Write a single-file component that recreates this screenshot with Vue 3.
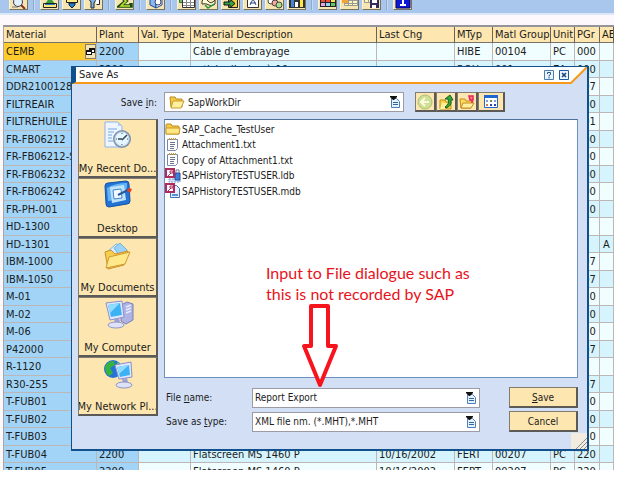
<script setup>
import { ref } from 'vue'

const toolbar = [
  { name: 'Details', svg: '<circle cx="7" cy="2" r="4.5" fill="#dff1ff" stroke="#335"/><path d="M10 5l4 4" stroke="#8a2d20" stroke-width="2"/><path d="M1 7h6" stroke="#777"/>' },
  { sep: true },
  { name: 'Sort ascending', svg: '<path d="M3 4L8-3l5 7z" fill="#3aa13a"/><path d="M1.500 3.500h13v4h-13z" fill="#ffe97a" stroke="#222"/><path d="M3 4h10v1H3z" fill="#2b7ad0"/>' },
  { name: 'Sort descending', svg: '<path d="M2.500-1.500h11v4h-11z" fill="#ffe97a" stroke="#222"/><path d="M5 3h6v2L8 8 5 5z" fill="#2b7ad0" stroke="#123"/>' },
  { name: 'Filter', svg: '<path d="M2-2h9L8 3v5H5V2z" fill="#7fb3ea" stroke="#223"/><path d="M9.500-.5h4v5h-3" fill="#fff" stroke="#223"/>' },
  { sep: true },
  { name: 'Total', svg: '<path d="M3-4h9M3-4l6 5-6 5h11V3" fill="none" stroke="#174b12" stroke-width="3.500"/><path d="M4-3l5 4-5 5h9" fill="none" stroke="#c7e52c" stroke-width="1.500"/>' },
  { sep: true },
  { name: 'Print preview', svg: '<path d="M2-2l6 2v8L2 5z" fill="#87b8f0" stroke="#224a9c"/><path d="M8 0l6-2v7L8 8z" fill="#e9f3ff" stroke="#224a9c"/><circle cx="10" cy="2" r="3" fill="#fff" stroke="#446"/>' },
  { sep: true },
  { name: 'Spreadsheet', svg: '<path d="M.5-4.500h11v7H.5z" fill="#6cba74" stroke="#2b7b42"/><path d="M3.500-.5h12v8h-12z" fill="#fff" stroke="#333"/><path d="M4 2.500h11M4 5.500h11M7.500 0v7M11.500 0v7" stroke="#8a8a8a"/>' },
  { name: 'Word processing', svg: '<path d="M1 1q3-4 6 0t7-1v4q-3 3-6 1T1 4z" fill="#fffbd0" stroke="#333"/><path d="M4 5l3 3 6-4" stroke="#2a9440" fill="none" stroke-width="1.500"/>' },
  { name: 'Local file', svg: '<path d="M5.500-3.500h9v11h-9z" fill="#f5cf3f" stroke="#222"/><path d="M1 2h6v-3l5 4.500-5 4.500V5H1z" fill="#35a04a" stroke="#111"/>' },
  { name: 'Mail recipient', svg: '<path d="M2.500-3.500h11v11h-11z" fill="#fff" stroke="#333"/><path d="M5 5l3-6 3 6M5 3h6" fill="none" stroke="#334a80"/>' },
  { name: 'ABC analysis', svg: '<circle cx="4" cy="1" r="3" fill="#fff" stroke="#444"/><circle cx="8" cy="3" r="3" fill="#f9a7a0" stroke="#444"/><circle cx="12" cy="5" r="3" fill="#a6df8e" stroke="#444"/>' },
  { name: 'Graphic', svg: '<path d="M0-3h16V8H0z" fill="#333"/><path d="M2 0h3v7H2z" fill="#3d85dd"/><path d="M6 2h3v5H6z" fill="#fff"/><path d="M11-1h3v8h-3z" fill="#ffe34a"/>' },
  { sep: true },
  { name: 'Choose layout', svg: '<path d="M0-4h16V7H0z" fill="#222"/><path d="M1-1h4v3H1zM6-1h4v3H6z" fill="#ef4b3a"/><path d="M11-1h4v3h-4z" fill="#ffe34a"/><path d="M1 3h4v3H1z" fill="#eaa7e5"/><path d="M6 3h4v3H6z" fill="#8fd8f5"/><path d="M11 3h4v3h-4z" fill="#62c95e"/>' },
  { name: 'Change layout', svg: '<path d="M2.500-4.500h13v10h-13z" fill="#fff5b5" stroke="#999"/><path d="M3 .5h12M3 3.500h12M6.500-4v9M10.500-4v9" stroke="#999"/><path d="M0 0h6v3H0z" fill="#f4a338"/>' },
  { name: 'Save layout', svg: '<path d="M.5-4.500h13v7H.5z" fill="#fff5b5" stroke="#999"/><path d="M1-.5h12M4.500-4v6" stroke="#999"/><path d="M6 0h9v8H6z" fill="#302c60"/><path d="M8 0h5v3H8zM8 5h4v3H8z" fill="#fff"/>' },
  { sep: true },
  { name: 'Information', svg: '<path d="M1-4h14V8H1z" fill="#1018d8" stroke="#000060"/><path d="M6-2h3v6h2v2H5V4h2V0H6z" fill="#fff"/>' }
]

const columns = ['Material', 'Plant', 'Val. Type', 'Material Description', 'Last Chg', 'MTyp', 'Matl Group', 'Unit', 'PGr', 'AE']
const row = (material, pgr, rest = {}) => ({ material, plant: '2200', text: '', date: '', type: '', group: '', unit: '', ae: '', pgr, ...rest })
const screen = { text: 'Flatscreen MS 1460 P', date: '10/16/2002', type: 'FERT', group: '00207', unit: 'PC' }
const rows = [
  row('CEMB', '000', { text: "Câble d'embrayage", type: 'HIBE', group: '00104', unit: 'PC' }),
  row('CMART', '000', { text: 'article d’usine à 10', type: 'ROH', group: '001', unit: 'EA' }),
  row('DDR2100128', '007'),
  row('FILTREAIR', '000'),
  row('FILTREHUILE', '001'),
  row('FR-FB06212', '000'),
  row('FR-FB06212-S', '000'),
  row('FR-FB06232', '000'),
  row('FR-FB06242', '000'),
  row('FR-PH-001', '220'),
  row('HD-1300', ''),
  row('HD-1301', '', { ae: 'A' }),
  row('IBM-1000', '007'),
  row('IBM-1050', '007'),
  row('M-01', '220'),
  row('M-02', '220'),
  row('M-06', '220'),
  row('P42000', '007'),
  row('R-1120', ''),
  row('R30-255', '007'),
  row('T-FUB01', '220'),
  row('T-FUB02', '220'),
  row('T-FUB03', '220'),
  row('T-FUB04', '220', screen),
  row('T-FUB05', '220', screen)
]

const places = [
  { label: 'My Recent Do...', svg: '<path d="M3 1h13l4 4v21H3z" fill="#eef5ff" stroke="#8fb3e8"/><path d="M16 1v4h4z" fill="#b7d0f5"/><path d="M6 8h9M6 11h6M6 14h4M6 17h4M6 20h5" stroke="#9cc0f0" stroke-width="1.500"/><circle cx="20" cy="18" r="9" fill="#7d94ad"/><circle cx="20" cy="18" r="7" fill="#e4f6ff" stroke="#c7d9e8"/><path d="M20 19l5-5M20 18h-4" stroke="#345" stroke-width="1.500"/><path d="M20 12v1M20 23v1M14 18h1M25 18h1" stroke="#456"/>' },
  { label: 'Desktop', svg: '<path d="M3 6q0-3 3-3l18-2q3 0 3 3l1 17q0 3-3 3L7 27q-3 0-3-3z" fill="#2273d4" stroke="#1552a8"/><path d="M5 8q8-5 20-5v4q-4 13-19 14z" fill="#63b4f5"/><path d="M8 7l14-2 2 15-14 3z" fill="#bfe2fb"/><path d="M11 10l8-1 1 9-8 1z" fill="#f4faff" stroke="#3e86d0"/><path d="M16 15l10-5" stroke="#245a9e" stroke-width="2"/><path d="M26 8l4 1-2 4-3-2z" fill="#e33f20"/>' },
  { label: 'My Documents', svg: '<path d="M5 12l9-8 4 1 8 7-7 12z" fill="#d9efff" stroke="#7eb4df"/><path d="M12 8l6-5 7 7-6 8z" fill="#9bd2f8" stroke="#78b1dc"/><path d="M3 12l6-2 4 4 13-3-4 14-16 4z" fill="#f7cd4d" stroke="#c8912c"/><path d="M4 28l3-11 21-5-5 12z" fill="#ffe98b" stroke="#d29a2e"/>' },
  { label: 'My Computer', svg: '<path d="M19 6l6-3 6 2v16l-7 4-5-3z" fill="#aeb3e4" stroke="#7a80bd"/><path d="M24 8l5-2M24 11l5-2M24 14l5-2" stroke="#e8ebff" stroke-width="1.500"/><path d="M4 4l16-2 2 16-14 3z" fill="#e4e8fb" stroke="#8790cc"/><path d="M6 6l12-2 2 12-11 2z" fill="#3cb2f5"/><path d="M6 6l12-2-10 10z" fill="#8fdcff"/><path d="M12 20l5-1 1 4-5 2z" fill="#9aa2d6"/><ellipse cx="14" cy="26" rx="8" ry="3" fill="#dfe2f7" stroke="#8f95c9"/>' },
  { label: 'My Network Pl...', svg: '<circle cx="11" cy="10" r="9" fill="#2474d8"/><path d="M3 8q3-7 9-6l1 4-5 3 3 5-4 3q-4-3-4-9z" fill="#36b33c"/><path d="M15 3l4 3-3 3z" fill="#7cd455"/><path d="M13 6l16-3 1 15-13 2z" fill="#e4e8fb" stroke="#8790cc"/><path d="M15 8l12-2 1 10-10 2z" fill="#3cb2f5"/><path d="M15 8l12-2-10 9z" fill="#8fdcff"/><path d="M20 20l5-1 1 4-5 1z" fill="#9aa2d6"/><ellipse cx="22" cy="26" rx="8" ry="3" fill="#dfe2f7" stroke="#8f95c9"/>' }
]

const page = '<path d="M2.500 2.500h10v9l-2 2h-8z" fill="#fff" stroke="#7b85ae"/><path d="M4.500 1v2M6.500 1v2M8.500 1v2M10.500 1v2" stroke="#c59a3a"/><path d="M5 5.500h5M5 7.500h5M5 9.500h4M5 11.500h4" stroke="#6b7690"/>'
const key = '<path d="M1 1h8v8H1z" fill="#fff" stroke="#b02a5c" stroke-width="2"/><path d="M3 8l3-3M5 3h3v2H5z" stroke="#b02a5c" fill="none"/>'
const folder = '<path d="M1 4q0-1 1-1h4l1 2h6q1 0 1 1v7H1z" fill="#f7ca45" stroke="#b98a1c"/><path d="M1 13V7h14l-1 6z" fill="#ffe784" stroke="#c89a2c"/>'
const openFolder = '<path d="M1 3h5l1 2h6v8H2z" fill="#f7ca45" stroke="#b98a1c"/><path d="M2 14l2-7h11l-3 7z" fill="#fff0a0" stroke="#c89a2c"/>'
const files = [
  { name: 'SAP_Cache_TestUser', svg: folder },
  { name: 'Attachment1.txt', svg: page },
  { name: 'Copy of Attachment1.txt', svg: page },
  { name: 'SAPHistoryTESTUSER.ldb', svg: '<path d="M4 11h11v3H4z" fill="#cfe0f7" stroke="#7e9cc8" stroke-dasharray="2 1"/><path d="M10 5h5v7h-5z" fill="#3f7fd8" stroke="#1f4f9c"/><path d="M11 5V2h3v3" fill="none" stroke="#6b7a96"/>' + key },
  { name: 'SAPHistoryTESTUSER.mdb', svg: '<path d="M5.500 2.500h6l3 3v9h-9z" fill="#e5efff" stroke="#3c70b8"/><path d="M7 12h6" stroke="#5c8ed2" stroke-width="2"/>' + key }
]

const tools = [
  { name: 'Back', svg: '<circle cx="8" cy="8" r="7" fill="#cfdf93" stroke="#a9bf70"/><path d="M12 8H5M8 4L4 8l4 4" stroke="#fffbe0" stroke-width="2" fill="none"/>' },
  { name: 'Up one level', svg: '<path d="M2 6h5l1 2h5v7H2z" fill="#fbd54d" stroke="#c08b1c"/><path d="M2 15l2-6h5l-2 6z" fill="#fff0a0"/><path d="M7 13q5-3 3-8H7l5-4 3 5h-2q1 6-5 8z" fill="#31a836" stroke="#17611b"/>' },
  { name: 'New folder', svg: '<path d="M1 5h5l1 2h7l-2 7H2z" fill="#ffdc5c" stroke="#c68a20"/><path d="M2 14l2-5h11l-3 5z" fill="#fff0a0" stroke="#c68a20"/><path d="M10 2h4v4h-3zM13 6v3" fill="#ff8a50" stroke="#e8236a" stroke-width="1.500"/>' },
  { name: 'View menu', svg: '<path d="M1.500 1.500h13v12h-13z" fill="#fff" stroke="#1f66d0"/><path d="M1 1h14v3H1z" fill="#1f66d0"/><path d="M3 6h2v2H3zM11 6h2v2h-2z" fill="#8a9bd8"/><path d="M7 6h2v2H7z" fill="#5f9a4b"/><path d="M3 10h2v2H3z" fill="#d07a50"/><path d="M7 10h2v2H7zM11 10h2v2h-2z" fill="#2b4aa8"/>' }
]
const drop = '<path d="M1.500 2.500h5l3 3v6h-8z" fill="#e6f1ff" stroke="#4d7fb5"/><path d="M3 6.500h5M3 8.500h5" stroke="#356596"/><path d="M0 0h7v1L4 4H3L0 1z" fill="#111"/>'

const fileName = ref('Report Export')
</script>

<template>
  <main class="screen">
    <nav class="toolbar" aria-label="List functions">
      <template v-for="(t, i) in toolbar" :key="i">
        <span v-if="t.sep" class="sep"></span>
        <button v-else class="tool" type="button" :aria-label="t.name">
          <svg viewBox="0 -7 16 16" width="16" height="16" fill="none" v-html="t.svg"></svg>
        </button>
      </template>
    </nav>

    <table class="grid">
      <colgroup>
        <col v-for="(c, i) in columns" :key="c" :class="'c' + i" />
      </colgroup>
      <thead>
        <tr><th v-for="c in columns" :key="c" scope="col">{{ c }}</th></tr>
      </thead>
      <tbody>
        <tr v-for="(r, i) in rows" :key="r.material">
          <td class="key" :class="{ current: i === 0 }">
            <div v-if="i === 0" class="active">
              <span>{{ r.material }}</span>
              <button type="button" aria-label="Possible entries">
                <svg viewBox="0 0 9 9" width="9" height="9"><path d="M3 1h6v5H3z" fill="#111" /><path d="M4 3h4v2H4z" fill="#fff" /><path d="M0 3h6v5H0z" fill="#111" /><path d="M1 5h4v2H1z" fill="#fff" /></svg>
              </button>
            </div>
            <template v-else>{{ r.material }}</template>
          </td>
          <td class="key">{{ r.plant }}</td>
          <td></td>
          <td>{{ r.text }}</td>
          <td>{{ r.date }}</td>
          <td>{{ r.type }}</td>
          <td>{{ r.group }}</td>
          <td>{{ r.unit }}</td>
          <td>{{ r.pgr }}</td>
          <td class="ae">{{ r.ae }}</td>
        </tr>
      </tbody>
    </table>

    <section class="dialog" role="dialog" aria-labelledby="dialog-title">
      <header class="titlebar">
        <h1 id="dialog-title">Save As</h1>
        <button type="button" aria-label="Help">
          <svg viewBox="0 0 10 10" width="10" height="10"><path d="M.5.5h9v9h-9z" fill="#eaf2fd" stroke="#4b7db5" /><path d="M3.500 4V2.500h3v2L5 5.500v1M5 7v1.500" fill="none" stroke="#24568f" /></svg>
        </button>
        <button type="button" aria-label="Close">
          <svg viewBox="0 0 10 10" width="10" height="10"><path d="M.5.5h9v9h-9z" fill="#eaf2fd" stroke="#1d5ba3" /><path d="M3 3l4 4M7 3L3 7" stroke="#14437c" stroke-width="1.500" /></svg>
        </button>
        <svg class="corner" viewBox="0 0 16 17" width="16" height="17"><path d="M16 0v17H0z" fill="#d2dff5" /><path d="M0 16L16 0" stroke="#f79a1c" stroke-width="2" /></svg>
      </header>

      <form class="content" @submit.prevent>
        <div class="lookin">
          <label for="folder">Save <u>i</u>n:</label>
          <div class="field">
            <svg viewBox="0 0 16 16" width="16" height="16" v-html="openFolder"></svg>
            <select id="folder"><option>SapWorkDir</option></select>
            <svg viewBox="0 0 11 12" width="11" height="12" v-html="drop"></svg>
          </div>
          <div class="viewtools">
            <button v-for="t in tools" :key="t.name" type="button" :aria-label="t.name">
              <svg viewBox="0 0 16 16" width="16" height="16" fill="none" v-html="t.svg"></svg>
            </button>
          </div>
        </div>

        <div class="columns">
          <div class="places">
            <button v-for="p in places" :key="p.label" type="button">
              <svg viewBox="0 0 32 30" width="32" height="30" fill="none" v-html="p.svg"></svg>
              <span>{{ p.label }}</span>
            </button>
          </div>

          <div class="right">
            <div class="list">
              <ul>
                <li v-for="f in files" :key="f.name">
                  <svg viewBox="0 0 16 16" width="16" height="16" v-html="f.svg"></svg>{{ f.name }}
                </li>
              </ul>
              <div class="note">
                <p>Input to File dialogue such as<br />this is not recorded by SAP</p>
                <svg viewBox="0 0 38 88" width="38" height="88"><path d="M10 3h17v40h8L19 82 3 43h7z" fill="#fff" stroke="#f8141c" stroke-width="4" stroke-linejoin="round" /></svg>
              </div>
            </div>

            <div class="entry">
              <label for="name">File <u>n</u>ame:</label>
              <div class="field">
                <input id="name" v-model="fileName" type="text" />
                <svg viewBox="0 0 11 12" width="11" height="12" v-html="drop"></svg>
              </div>
              <button class="action" type="submit"><span><u>S</u>ave</span></button>
              <label for="type">Save as <u>t</u>ype:</label>
              <div class="field">
                <select id="type"><option>XML file nm. (*.MHT),*.MHT</option></select>
                <svg viewBox="0 0 11 12" width="11" height="12" v-html="drop"></svg>
              </div>
              <button class="action" type="button">Cancel</button>
            </div>
          </div>
        </div>
      </form>
      <svg class="grip" viewBox="0 0 16 16" width="16" height="16"><path d="M0 0h16v16H0z" fill="#f1ecdf" /><path d="M5 16L16 5M9 16l7-7M13 16l3-3" stroke="#8d8d8d" /></svg>
    </section>
  </main>
</template>

<style>
body {
  margin: 0;
  background: #fff;
}
</style>

<style scoped>
* {
  box-sizing: border-box;
}
button,
input,
select {
  font: inherit;
  color: inherit;
  margin: 0;
  padding: 0;
}
svg {
  flex: none;
  display: block;
}
.screen {
  position: relative;
  height: calc(100vh - 19px);
  margin-right: 13px;
  overflow: hidden;
  background: #fcf8fc;
  color: #1c1c1c;
  font-family: "DejaVu Sans Condensed", "DejaVu Sans", sans-serif;
  font-size: 11px;
}
.toolbar {
  display: flex;
  align-items: flex-end;
  gap: 3px;
  height: 15px;
  padding: 0 0 3px 9px;
  background: #a9c7ec;
  border-bottom: 2px solid #dce8f7;
}
.tool {
  flex: none;
  display: flex;
  align-items: flex-end;
  justify-content: center;
  width: 19px;
  height: 20px;
  background: #f7e5b0;
  border: 1px solid #fbf3d8;
  border-right-color: #77725f;
  border-bottom-color: #77725f;
}
.sep {
  width: 2px;
  height: 20px;
  margin: 0 2px;
  background: #8fa9c8;
  border-right: 1px solid #c5d9f2;
}
.grid {
  width: calc(100% - 3px);
  margin: 10px 0 0 3px;
  table-layout: fixed;
  border-spacing: 0;
  border-top: 2px solid #94949a;
  border-left: 1px solid #a8a6a6;
}
.c0 { width: 93px; }
.c1 { width: 42px; }
.c2 { width: 52px; }
.c3 { width: 186px; }
.c4 { width: 78px; }
.c5 { width: 38px; }
.c6 { width: 58px; }
.c7 { width: 24px; }
.c8 { width: 25px; }
th,
td {
  padding: 0 0 0 2px;
  overflow: hidden;
  white-space: nowrap;
  text-align: left;
  font-weight: normal;
  line-height: 15px;
}
th {
  height: 16px;
  background: #fde6b0;
  border-right: 1px solid #68645c;
  border-bottom: 1px solid #77736a;
}
td {
  height: 17px;
  background: #d6f4fd;
  border-right: 1px solid #bcb6b6;
  border-bottom: 1px solid #bcb6b6;
}
tr:nth-child(odd) td {
  height: 18px;
  background: #f1feff;
}
tbody tr .key.key {
  background: #a2d4f7;
}
tbody tr .current.current {
  background: #fdcb2c;
}
.ae {
  padding-left: 3px;
}
.active {
  display: flex;
  justify-content: space-between;
}
.active button {
  display: flex;
  align-items: center;
  justify-content: center;
  width: 11px;
  height: 15px;
  background: #f3e3b5;
  border: 1px solid #857e6c;
}

.dialog {
  position: absolute;
  top: 66px;
  left: 71px;
  right: 25px;
  background: #d2dff5;
  border: 1px solid #11508a;
  border-right-width: 2px;
  border-bottom-width: 2px;
}
.titlebar {
  display: flex;
  align-items: center;
  gap: 5px;
  height: 17px;
  padding-left: 3px;
  background: #fff;
  border-left: 4px solid #11508a;
  border-bottom: 2px solid #f79a1c;
}
.titlebar h1 {
  flex: 1;
  margin: 0;
  font-size: 11px;
  font-weight: normal;
}
.titlebar button {
  background: none;
  border: 0;
}
.titlebar .corner {
  align-self: flex-start;
  margin-left: -3px;
}
.content {
  display: flex;
  flex-direction: column;
  gap: 7px;
  padding: 8px 9px 17px 6px;
  font-size: 10px;
}
.lookin {
  display: flex;
  align-items: center;
  gap: 7px;
}
.lookin label {
  width: 79px;
  text-align: right;
}
.lookin .field {
  width: 240px;
}
.field {
  display: flex;
  align-items: center;
  height: 20px;
  padding: 0 2px;
  background: #fff;
  border: 1px solid #9b9ba3;
}
.lookin .field {
  padding-left: 4px;
}
.field input,
.field select {
  flex: 1;
  min-width: 0;
  background: none;
  border: 0;
  outline: 0;
  appearance: none;
}
.lookin select {
  padding-left: 3px;
}
.viewtools {
  display: flex;
  margin-left: 4px;
}
.viewtools button {
  display: flex;
  align-items: center;
  justify-content: center;
  width: 21px;
  height: 20px;
}
.viewtools button:last-child {
  width: 27px;
}
.viewtools button,
.places button,
.action {
  background: #fde6b0;
  border: 1px solid #817c70;
  border-right: 2px solid #5c5a56;
  border-bottom: 2px solid #5c5a56;
}
.columns {
  display: flex;
  align-items: flex-start;
  gap: 6px;
}
.places {
  display: flex;
  flex-direction: column;
  width: 80px;
}
.places button {
  display: flex;
  flex-direction: column;
  align-items: center;
  justify-content: space-between;
  height: 59px;
  padding: 1px 0 0;
  overflow: hidden;
  white-space: nowrap;
  font-size: 11px;
  line-height: 14px;
}
.places button:nth-child(even) {
  height: 60px;
}
.right {
  flex: 1;
  display: flex;
  flex-direction: column;
  gap: 9px;
}
.list {
  background: #fff;
  border: 1px solid #6c8fbd;
  border-top-color: #4e6f96;
}
.list ul {
  margin: 0;
  padding: 1px 0 0;
  list-style: none;
}
.list li {
  display: flex;
  align-items: center;
  gap: 1px;
  height: 16px;
}
.list li:nth-child(even) {
  height: 15px;
}
.note {
  display: flow-root;
  padding: 63px 0 0 101px;
  color: #e8131b;
  font-family: Lato, sans-serif;
  font-size: 16px;
  line-height: 21px;
}
.note p {
  margin: 0;
}
.note svg {
  position: relative;
  margin: -1px 0 -14px 35px;
}
.entry {
  display: grid;
  grid-template-columns: 86px minmax(0, 228px) 1fr;
  align-items: center;
  row-gap: 3px;
  padding-left: 2px;
}
.entry .action {
  justify-self: end;
  width: 69px;
  height: 21px;
}
.grip {
  position: absolute;
  right: 0;
  bottom: 0;
}
</style>
